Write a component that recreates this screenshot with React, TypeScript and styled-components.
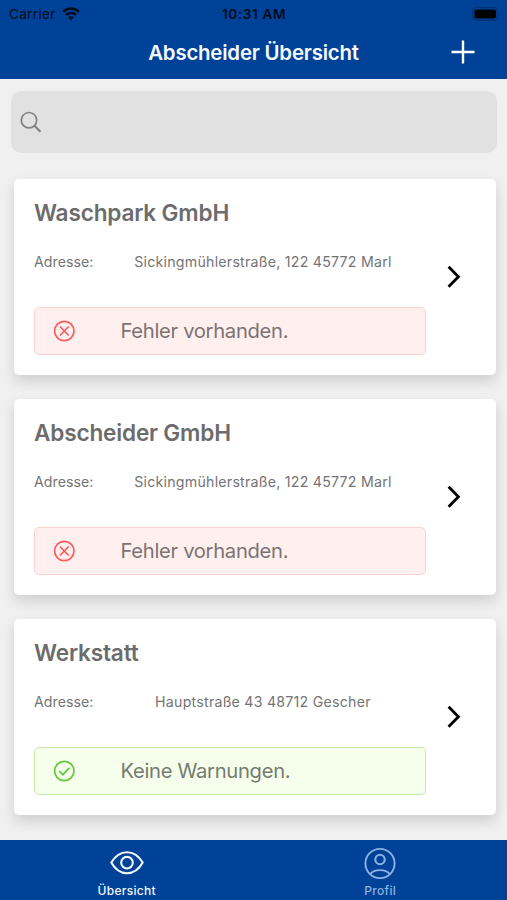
import React from 'react';
import styled, { createGlobalStyle } from 'styled-components';

const GlobalStyle = createGlobalStyle`
  * { box-sizing: border-box; }
  body { margin: 0; background: #f0f0f0; font-family: Inter, 'Liberation Sans', sans-serif; }
  svg { display: block; flex: none; }
`;

const Screen = styled.div`
  display: flex;
  flex-direction: column;
  width: 507px;
  height: 900px;
  overflow: hidden;
  background: #f0f0f0;
`;

const Header = styled.header`
  height: 79px;
  flex: none;
  background: #004297;
`;

const StatusBar = styled.div`
  display: grid;
  grid-template-columns: 1fr auto 1fr;
  align-items: center;
  height: 27px;
  padding: 0 6px 0 9px;
  color: #000b1c;
`;

const Carrier = styled.div`
  display: flex;
  align-items: center;
  gap: 6px;
  font-size: 13.4px;
  letter-spacing: 0.4px;
`;

const Clock = styled.div`
  margin-right: 2px;
  font-size: 13.6px;
  font-weight: 600;
  letter-spacing: 0.6px;
`;

const Battery = styled.div`
  display: flex;
  justify-content: flex-end;
`;

const NavBar = styled.div`
  display: grid;
  grid-template-columns: 1fr auto 1fr;
  align-items: center;
  height: 50px;
  padding-right: 32px;
  padding-left: 32px;
`;

const Title = styled.h1`
  grid-column: 2;
  margin: 1px 0 0;
  color: #f7faff;
  font-size: 20.4px;
  font-weight: 600;
  line-height: 24px;
  letter-spacing: -0.2px;
`;

const AddButton = styled.button`
  justify-self: end;
  padding: 0;
  border: 0;
  background: none;
  color: #fff;
`;

const Search = styled.div`
  display: flex;
  align-items: center;
  flex: none;
  height: 62px;
  margin: 12px 10.5px 0 11px;
  padding-left: 9px;
  border-radius: 10px;
  background: #e1e1e1;
`;

const List = styled.main`
  display: flex;
  flex: 1;
  flex-direction: column;
  gap: 24px;
  min-height: 0;
  padding: 26px 11px 0 14px;
`;

const Card = styled.article`
  display: flex;
  flex: none;
  height: 196px;
  padding: 20px 0 0 20px;
  border-radius: 5px;
  background: #fff;
  box-shadow: 0 6px 13px rgba(0, 0, 0, 0.14);
`;

const CardBody = styled.div`
  width: 392px;
`;

const CardTitle = styled.h2`
  margin: 0;
  color: #6c6c6c;
  font-size: 22.6px;
  font-weight: 600;
  line-height: 28px;
  letter-spacing: -0.18px;
  white-space: nowrap;
`;

const AddressRow = styled.div`
  display: flex;
  height: 20px;
  margin-top: 25px;
  color: #747474;
  font-size: 14.2px;
  line-height: 20px;
  letter-spacing: 0.23px;
`;

const AddressLabel = styled.span`
  width: 66px;
  letter-spacing: 0.02px;
`;

const AddressValue = styled.span`
  width: 327px;
  text-align: center;
  white-space: nowrap;
`;

type Tone = 'error' | 'ok';

const Status = styled.div<{ $tone: Tone }>`
  display: flex;
  align-items: center;
  height: 48px;
  margin-top: 35px;
  padding-left: 18px;
  border: 1.5px solid ${p => (p.$tone === 'error' ? '#fdd2ce' : '#c3eda5')};
  border-radius: 5px;
  background: ${p => (p.$tone === 'error' ? '#fff0ef' : '#f5ffeb')};
  color: ${p => (p.$tone === 'error' ? '#fb5c5e' : '#60ca38')};
`;

const StatusText = styled.span<{ $tone: Tone }>`
  margin-left: 45.5px;
  color: ${p => (p.$tone === 'error' ? '#7b7372' : '#767b71')};
  font-size: 20.2px;
  line-height: 24px;
  letter-spacing: -0.3px;
`;

const Arrow = styled.div`
  padding-top: 66px;
  padding-left: 19px;
`;

const TabBar = styled.nav`
  display: grid;
  grid-template-columns: 1fr 1fr;
  flex: none;
  height: 60px;
  background: #004297;
`;

const Tab = styled.div<{ $active?: boolean }>`
  display: flex;
  flex-direction: column;
  align-items: center;
  padding-top: 6px;
  color: ${p => (p.$active ? '#f2f7ff' : '#8db2e2')};
`;

const TabLabel = styled.span`
  margin-top: 3px;
  font-size: 12px;
  font-weight: 500;
  line-height: 16px;
  letter-spacing: 0.3px;
`;

const WifiIcon = () => (
  <svg width="18" height="14" viewBox="0 0 18 14" fill="none" stroke="currentColor" strokeWidth="2.5">
    <path d="M1.2 4.8C5.7.3 12.3.3 16.8 4.8" />
    <path d="M4 8C6.9 5.2 11.1 5.2 14 8" />
    <path d="M9 13.3 5.9 10.3Q9 8 12.1 10.3Z" fill="currentColor" stroke="none" />
  </svg>
);

const BatteryIcon = () => (
  <svg width="29" height="14" viewBox="0 0 29 14">
    <rect x=".7" y=".7" width="25" height="12.6" rx="3.5" fill="none" stroke="#00317a" strokeWidth="1.2" />
    <rect x="2.5" y="2.5" width="21.5" height="9" rx="2" fill="#000205" />
    <path d="M27 5v4c1.8-.6 1.8-3.4 0-4Z" fill="#00317a" />
  </svg>
);

const PlusIcon = () => (
  <svg width="24" height="24" viewBox="0 0 24 24" fill="none" stroke="currentColor" strokeWidth="2.4">
    <path d="M12 .5v23M.5 12h23" />
  </svg>
);

const SearchIcon = () => (
  <svg width="22" height="22" viewBox="0 0 22 22" fill="none" stroke="#828282">
    <circle cx="9" cy="9.2" r="7.7" strokeWidth="1.7" />
    <path d="m14.4 14.7 6.1 6" strokeWidth="2.3" />
  </svg>
);

const StatusIcon = ({ tone }: { tone: Tone }) => (
  <svg width="22" height="22" viewBox="0 0 22 22" fill="none" stroke="currentColor" strokeWidth="1.7">
    <circle cx="11.3" cy="11" r="9.7" />
    {tone === 'error' ? <path d="m6.9 6.5 8.8 9m0-9-8.8 9" /> : <path d="m6.3 11.2 3.6 3.5 6.5-6.8" />}
  </svg>
);

const ChevronIcon = () => (
  <svg width="26" height="24" viewBox="0 0 26 24" fill="none" stroke="#000" strokeWidth="2.8">
    <path d="m3.6 1.8 9.8 10L3.6 21.8" />
  </svg>
);

const EyeIcon = () => (
  <svg width="36" height="34" viewBox="0 0 36 34" fill="none" stroke="currentColor" strokeWidth="2.1">
    <path d="M2.3 16.5C5.2 11.6 10.4 6.2 18 6.2S30.8 11.6 33.7 16.5C30.8 21.8 25.6 27.2 18 27.2S5.2 21.8 2.3 16.5Z" strokeLinejoin="round" />
    <circle cx="18" cy="16.7" r="5.8" />
  </svg>
);

const ProfileIcon = () => (
  <svg width="34" height="34" viewBox="0 0 34 34" fill="none" stroke="currentColor" strokeWidth="1.9">
    <circle cx="17" cy="17.5" r="14.6" />
    <circle cx="17" cy="13.5" r="4.7" strokeWidth="2.1" />
    <path d="M7.2 28.1C11.2 22.8 22.8 22.8 26.8 28.1" />
  </svg>
);

const separators: { name: string; address: string; tone: Tone; status: string }[] = [
  { name: 'Waschpark GmbH', address: 'Sickingmühlerstraße, 122 45772 Marl', tone: 'error', status: 'Fehler vorhanden.' },
  { name: 'Abscheider GmbH', address: 'Sickingmühlerstraße, 122 45772 Marl', tone: 'error', status: 'Fehler vorhanden.' },
  { name: 'Werkstatt', address: 'Hauptstraße 43 48712 Gescher', tone: 'ok', status: 'Keine Warnungen.' },
];

export default function App() {
  return (
    <Screen>
      <GlobalStyle />
      <Header>
        <StatusBar>
          <Carrier>Carrier <WifiIcon /></Carrier>
          <Clock>10:31 AM</Clock>
          <Battery><BatteryIcon /></Battery>
        </StatusBar>
        <NavBar>
          <Title>Abscheider Übersicht</Title>
          <AddButton aria-label="Hinzufügen"><PlusIcon /></AddButton>
        </NavBar>
      </Header>
      <Search><SearchIcon /></Search>
      <List>
        {separators.map(item => (
          <Card key={item.name}>
            <CardBody>
              <CardTitle>{item.name}</CardTitle>
              <AddressRow>
                <AddressLabel>Adresse:</AddressLabel>
                <AddressValue>{item.address}</AddressValue>
              </AddressRow>
              <Status $tone={item.tone}>
                <StatusIcon tone={item.tone} />
                <StatusText $tone={item.tone}>{item.status}</StatusText>
              </Status>
            </CardBody>
            <Arrow><ChevronIcon /></Arrow>
          </Card>
        ))}
      </List>
      <TabBar>
        <Tab $active><EyeIcon /><TabLabel>Übersicht</TabLabel></Tab>
        <Tab><ProfileIcon /><TabLabel>Profil</TabLabel></Tab>
      </TabBar>
    </Screen>
  );
}
